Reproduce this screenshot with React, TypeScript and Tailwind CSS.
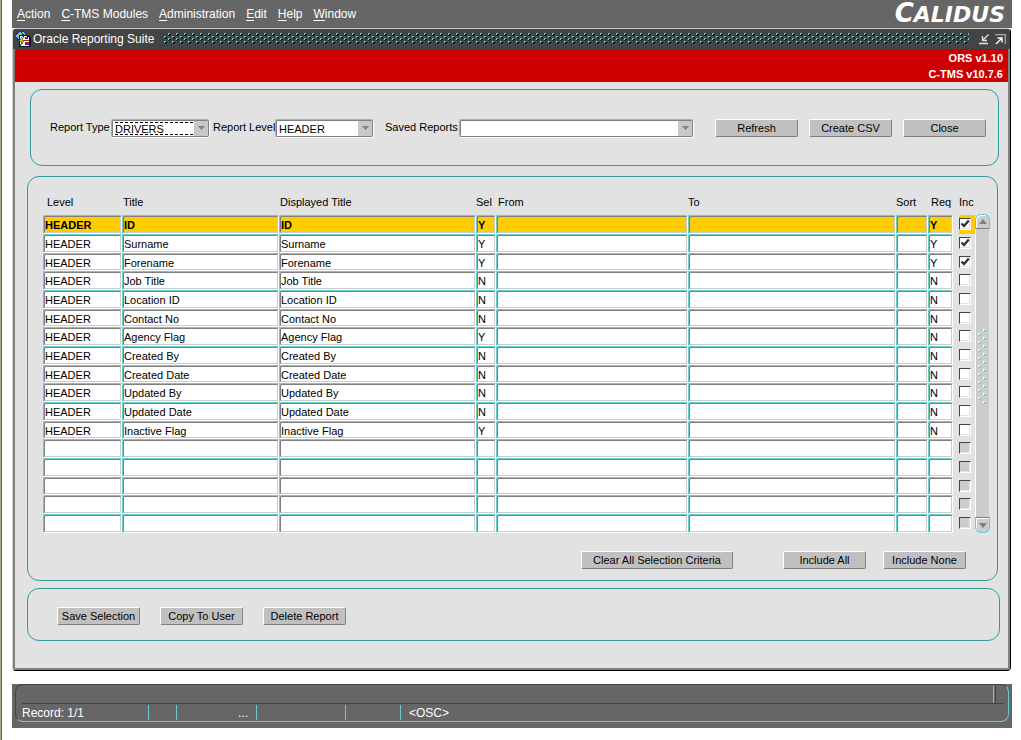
import React from "react";

type Row = { title: string; sel: string; req: string; inc: boolean };

const records: Row[] = [
  { title: "ID", sel: "Y", req: "Y", inc: true },
  { title: "Surname", sel: "Y", req: "Y", inc: true },
  { title: "Forename", sel: "Y", req: "Y", inc: true },
  { title: "Job Title", sel: "N", req: "N", inc: false },
  { title: "Location ID", sel: "N", req: "N", inc: false },
  { title: "Contact No", sel: "N", req: "N", inc: false },
  { title: "Agency Flag", sel: "Y", req: "N", inc: false },
  { title: "Created By", sel: "N", req: "N", inc: false },
  { title: "Created Date", sel: "N", req: "N", inc: false },
  { title: "Updated By", sel: "N", req: "N", inc: false },
  { title: "Updated Date", sel: "N", req: "N", inc: false },
  { title: "Inactive Flag", sel: "Y", req: "N", inc: false },
];

const rows: (Row | null)[] = [...records, null, null, null, null, null];

const menus = [
  ["A", "ction"],
  ["C", "-TMS Modules"],
  ["A", "dministration"],
  ["E", "dit"],
  ["H", "elp"],
  ["W", "indow"],
];

function PushButton({ children, wide = false }: { children: React.ReactNode; wide?: boolean }) {
  return (
    <button
      type="button"
      className={`${wide ? "w-[152px]" : "w-[83px]"} h-[18px] shrink-0 rounded-[2px] border border-t-white border-l-white border-r-[#808080] border-b-[#808080] bg-[#c0c0c0] text-center text-[11px] leading-4 whitespace-nowrap text-black`}
    >
      {children}
    </button>
  );
}

function Picker({ id, label, value, labelClass, boxClass, focused = false }: {
  id: string;
  label: string;
  value: string;
  labelClass: string;
  boxClass: string;
  focused?: boolean;
}) {
  return (
    <>
      <label htmlFor={id} className={`${labelClass} shrink-0 whitespace-nowrap`}>{label}</label>
      <div className={`${boxClass} relative h-[18px] rounded-[2px] border border-t-[#66cccc] border-l-[#66cccc] border-r-[#808080] border-b-[#808080] bg-white shadow-[inset_1px_1px_0_#808080,1px_1px_0_#fff]`}>
        <select
          id={id}
          defaultValue={value}
          className="block h-4 w-full appearance-none bg-transparent pt-[3px] pr-4 pl-[3px] text-[11px] leading-3 text-black outline-none"
        >
          <option>{value}</option>
        </select>
        {focused && <span className="pointer-events-none absolute top-[2px] right-[15px] bottom-px left-[3px] border-y border-dashed border-black" />}
        <span className="pointer-events-none absolute top-px right-0 bottom-0 flex w-[14px] items-center justify-center bg-[#c8c8c8]">
          <svg width="7" height="4" viewBox="0 0 7 4" aria-hidden="true"><path d="M0 0H7L3.5 4Z" fill="#808080" /></svg>
        </span>
      </div>
    </>
  );
}

function Field({ label, value, height, active }: { label: string; value: string; height: string; active: boolean }) {
  return (
    <td className="p-0">
      <input
        type="text"
        aria-label={label}
        defaultValue={value}
        className={`${height} ${active ? "bg-[#ffcc00] font-bold" : "bg-white"} block w-full rounded-[2px] border border-t-[#66cccc] border-l-[#66cccc] border-r-white border-b-white px-px pt-px text-[11px] leading-4 text-black shadow-[inset_1px_1px_0_#808080,inset_-1px_-1px_0_#cccccc] outline-none`}
      />
    </td>
  );
}

function ReportTable() {
  return (
    <table className="w-full table-fixed border-collapse">
      <colgroup>
        <col className="w-[79px]" />
        <col className="w-[157px]" />
        <col className="w-[197px]" />
        <col className="w-[20px]" />
        <col />
        <col className="w-[208px]" />
        <col className="w-[32px]" />
        <col className="w-[25px]" />
        <col className="w-[22px]" />
      </colgroup>
      <thead>
        <tr className="h-[21px] text-left align-top leading-[17px] whitespace-nowrap">
          <th className="p-0 pl-1 font-normal">Level</th>
          <th className="p-0 pl-px font-normal">Title</th>
          <th className="p-0 pl-px font-normal">Displayed Title</th>
          <th className="p-0 font-normal">Sel</th>
          <th className="p-0 pl-[2px] font-normal">From</th>
          <th className="p-0 font-normal">To</th>
          <th className="p-0 font-normal">Sort</th>
          <th className="p-0 pl-[3px] font-normal">Req</th>
          <th className="p-0 pl-[6px] font-normal">Inc</th>
        </tr>
      </thead>
      <tbody>
        {rows.map((r, i) => {
          const height = i % 3 === 2 ? "h-[18px]" : "h-[19px]";
          const active = i === 0;
          const n = i + 1;
          return (
            <tr key={i}>
              <Field label={`Level ${n}`} value={r ? "HEADER" : ""} height={height} active={active} />
              <Field label={`Title ${n}`} value={r ? r.title : ""} height={height} active={active} />
              <Field label={`Displayed title ${n}`} value={r ? r.title : ""} height={height} active={active} />
              <Field label={`Sel ${n}`} value={r ? r.sel : ""} height={height} active={active} />
              <Field label={`From ${n}`} value="" height={height} active={active} />
              <Field label={`To ${n}`} value="" height={height} active={active} />
              <Field label={`Sort ${n}`} value="" height={height} active={active} />
              <Field label={`Req ${n}`} value={r ? r.req : ""} height={height} active={active} />
              <td className="p-0 pl-[6px]">
                <div className={`${height} ${active ? "bg-[#ffcc00]" : ""} grid content-start pt-[3px]`}>
                  <input
                    type="checkbox"
                    aria-label={`Include ${n}`}
                    defaultChecked={r ? r.inc : false}
                    disabled={!r}
                    className="peer col-start-1 row-start-1 size-3 appearance-none border border-t-[#444] border-l-[#444] border-r-white border-b-white bg-white shadow-[inset_-1px_-1px_0_#e2e2e2] disabled:bg-[#cccccc]"
                  />
                  <svg className="pointer-events-none invisible col-start-1 row-start-1 peer-checked:visible" width="12" height="12" viewBox="0 0 12 12" aria-hidden="true">
                    <path d="M2.5 5.5L5 8L9.8 2.5" fill="none" stroke="#333" strokeWidth="2.4" />
                  </svg>
                </div>
              </td>
            </tr>
          );
        })}
      </tbody>
    </table>
  );
}

function ScrollBar() {
  return (
    <div className="mt-5 flex w-[15px] shrink-0 flex-col">
      <button type="button" aria-label="Scroll up" className="flex h-[15px] items-center justify-center rounded-t-[6px] border border-[#66cccc] border-b-[#808080] bg-[#cccccc] shadow-[inset_1px_1px_0_#fff]">
        <svg width="8" height="5" viewBox="0 0 8 5" aria-hidden="true"><path d="M0 5H8L4 0Z" fill="#808080" /></svg>
      </button>
      <div className="mr-px flex flex-1 items-center border-l border-white bg-[#cccccc] pb-3">
        <svg width="10" height="76" className="ml-[2px]" aria-hidden="true" shapeRendering="crispEdges">
          <defs>
            <pattern id="grip" width="10" height="8" patternUnits="userSpaceOnUse">
              <path d="M5 0h2v2h-2zM0 4h2v2h-2z" fill="#fff" />
              <path d="M6 1h2v1h-1v1h-1zM1 5h2v1h-1v1h-1z" fill="#66cccc" />
            </pattern>
          </defs>
          <rect width="10" height="76" fill="url(#grip)" />
        </svg>
      </div>
      <button type="button" aria-label="Scroll down" className="flex h-[16px] items-center justify-center rounded-b-[6px] border border-[#66cccc] border-t-[#808080] bg-[#cccccc] shadow-[inset_1px_1px_0_#fff]">
        <svg width="8" height="5" viewBox="0 0 8 5" aria-hidden="true"><path d="M0 0H8L4 5Z" fill="#808080" /></svg>
      </button>
    </div>
  );
}

function TitleBar() {
  return (
    <header className="flex h-5 items-center gap-[10px] bg-[#444444] pr-1 pl-[2px] text-white">
      <div className="flex items-center gap-[2px]">
        <svg width="16" height="16" viewBox="0 0 16 16" shapeRendering="crispEdges" aria-hidden="true">
          <circle cx="6" cy="5" r="5.5" fill="#1c2c9c" />
          <path d="M1 5l3-4 3 1-1 4-3 2zM7 1l3 1v2l-2-1z" fill="#7fc7a4" />
          <path d="M4 4h9l3 3v9H4z" fill="#111" />
          <path d="M5 5h7v1h2v9H5z" fill="#fff" />
          <path d="M10 6h3v2h-3zM10 12h4v2h-4z" fill="#2030d0" />
          <path d="M10 9h4v1h-4zM10 11h4v1h-4z" fill="#e01818" />
          <path d="M8 5L4 10h3l-2 5 5-6H7l2-4z" fill="#ffe000" stroke="#111" strokeWidth=".5" />
        </svg>
        <h1 className="text-[12px] leading-4 whitespace-nowrap">Oracle Reporting Suite</h1>
      </div>
      <svg className="h-3 min-w-0 flex-1" aria-hidden="true" shapeRendering="crispEdges">
        <defs>
          <pattern id="titledots" width="8" height="12" patternUnits="userSpaceOnUse">
            <path d="M5 1h2v1h-1v1h-1zM1 4h2v1h-1v1h-1zM5 6h2v1h-1v1h-1zM1 9h2v1h-1v1h-1z" fill="#000" />
            <path d="M4 0h2v1h-1v1h-1zM0 3h2v1h-1v1h-1zM4 5h2v1h-1v1h-1zM0 8h2v1h-1v1h-1z" fill="#66cccc" />
          </pattern>
        </defs>
        <rect width="100%" height="12" fill="url(#titledots)" />
      </svg>
      <div className="flex items-center gap-[6px]">
        <button type="button" aria-label="Minimize">
          <svg className="block" width="10" height="11" viewBox="0 0 10 11" aria-hidden="true">
            <path d="M9.5 .5L4 6M3.5 2v4.5H8M0 9.5H9" fill="none" stroke="#e2e2e2" strokeWidth="1.4" />
          </svg>
        </button>
        <button type="button" aria-label="Restore">
          <svg className="block" width="11" height="11" viewBox="0 0 11 11" aria-hidden="true">
            <path d="M0 .7H10.3V10" fill="none" stroke="#aaa" strokeWidth="1.3" />
            <path d="M1 10L6.5 4.5M2.5 4H7V8.5" fill="none" stroke="#fff" strokeWidth="1.4" />
          </svg>
        </button>
      </div>
    </header>
  );
}

function StatusBar() {
  return (
    <footer className="mt-[13px] h-11 bg-[#666666] px-[3px] text-[12px] text-white">
      <div className="flex h-[38px] flex-col rounded-[8px] border border-t-[#444] border-l-[#444] border-r-[#66cccc] border-b-[#66cccc] pr-1 pl-[6px]">
        <div className="flex h-[19px] justify-end border-b border-[#444] pr-[8px]">
          <span className="mt-px w-[3px] border-l border-r border-l-[#66cccc] border-r-[#444]" />
        </div>
        <div className="flex h-4 items-stretch pt-px leading-4">
          <span className="w-[127px] border-r border-[#66cccc]">Record: 1/1</span>
          <span className="w-7 border-r border-[#66cccc]" />
          <span className="w-20 border-r border-[#66cccc] pr-2 text-right">...</span>
          <span className="w-[89px] border-r border-[#66cccc]" />
          <span className="w-[55px] border-r border-[#66cccc]" />
          <span className="pl-2">&lt;OSC&gt;</span>
        </div>
      </div>
    </footer>
  );
}

export default function App() {
  return (
    <div className="min-h-screen border-l border-[#b0a890] bg-white font-['Liberation_Sans',Arial,sans-serif] text-[11px] text-black">
      <div className="min-h-screen border-l border-[#66604f] pr-[9px] pl-[10px]">
        <nav className="flex h-7 items-center justify-between bg-[#666666] pr-[7px] pl-[5px] text-white">
          <div className="flex gap-[11px] text-[12px] leading-4 whitespace-nowrap">
            {menus.map(([key, rest]) => (
              <button key={key + rest} type="button">
                <span className="underline underline-offset-2">{key}</span>
                {rest}
              </button>
            ))}
          </div>
          <span className="font-['DejaVu_Sans',sans-serif] text-[22px] leading-7 font-bold italic">
            <span className="text-[26px]">C</span>ALIDUS
          </span>
        </nav>

        <main className="mr-px overflow-hidden rounded-[4px] border border-t-[#cccccc] border-l-[#cccccc] border-r-black border-b-black">
          <div className="border-x-2 border-b-2 border-[#808080] bg-[#e2e2e2]">
            <div className="-mx-[2px]">
              <TitleBar />
            </div>
            <div className="h-[33px] bg-[#cc0000] pt-px pr-[5px] text-right font-bold leading-4 text-white">
              <p>ORS v1.10</p>
              <p>C-TMS v10.7.6</p>
            </div>

            <div className="pb-[27px]">
              <section className="mt-[7px] mr-[9px] ml-[15px] flex h-[77px] items-center rounded-[12px] border border-[#339999] pr-3 pl-[19px]">
                <Picker id="type" label="Report Type" value="DRIVERS" labelClass="w-[61px]" boxClass="w-[98px] shrink-0" focused />
                <span className="w-1 shrink-0" />
                <Picker id="level" label="Report Level" value="HEADER" labelClass="w-[62px]" boxClass="w-[98px] shrink-0" />
                <span className="w-3 shrink-0" />
                <Picker id="saved" label="Saved Reports" value="" labelClass="w-[74px]" boxClass="min-w-0 flex-1" />
                <div className="ml-[22px] flex gap-[11px] pt-px">
                  <PushButton>Refresh</PushButton>
                  <PushButton>Create CSV</PushButton>
                  <PushButton>Close</PushButton>
                </div>
              </section>

              <section className="mt-[10px] mr-[10px] ml-3 rounded-[12px] border border-[#339999] pt-[17px] pr-[7px] pb-[11px] pl-[15px]">
                <div className="flex">
                  <div className="min-w-0 flex-1">
                    <ReportTable />
                  </div>
                  <ScrollBar />
                </div>
                <div className="mt-[18px] flex justify-end gap-[17px] pr-6">
                  <div className="mr-[33px]">
                    <PushButton wide>Clear All Selection Criteria</PushButton>
                  </div>
                  <PushButton>Include All</PushButton>
                  <PushButton>Include None</PushButton>
                </div>
              </section>

              <section className="mt-[7px] mr-2 ml-3 flex h-[53px] items-center gap-5 rounded-[12px] border border-[#339999] pt-[2px] pl-[29px]">
                <PushButton>Save Selection</PushButton>
                <PushButton>Copy To User</PushButton>
                <PushButton>Delete Report</PushButton>
              </section>
            </div>
          </div>
        </main>

        <StatusBar />
      </div>
    </div>
  );
}
